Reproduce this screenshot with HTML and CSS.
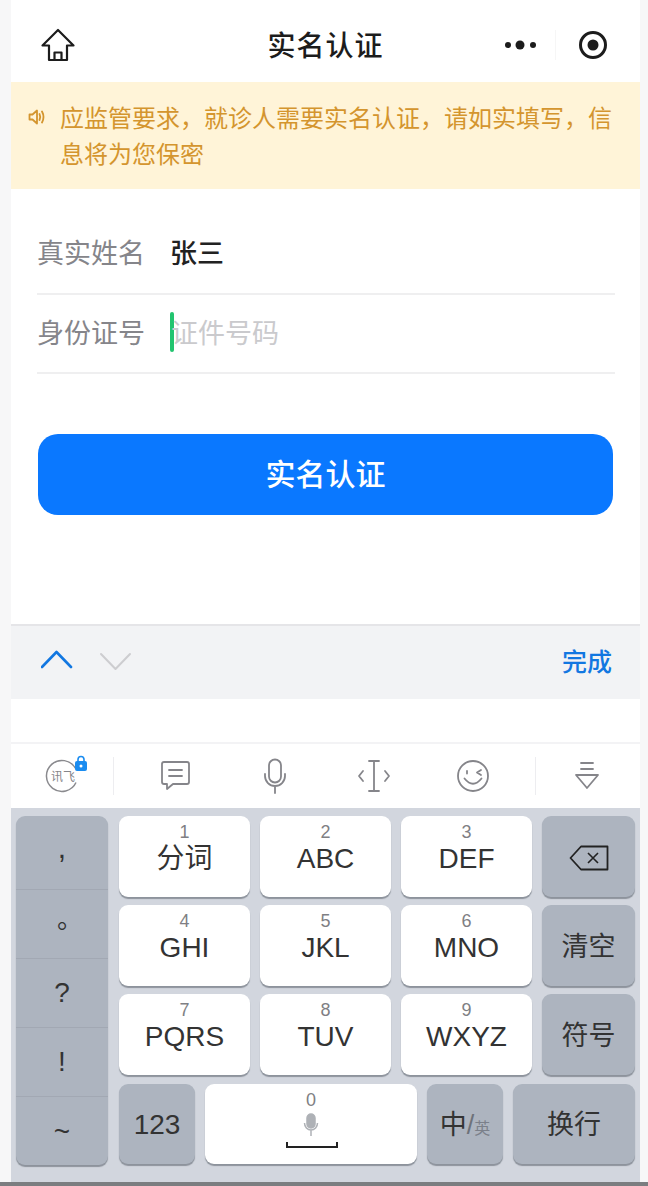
FILE: index.html
```html
<!DOCTYPE html>
<html lang="zh-CN">
<head>
    <meta charset="UTF-8">
    <meta name="viewport" content="width=device-width, initial-scale=1.0">
    <title>实名认证</title>
    <link rel="stylesheet" href="styles.css">
</head>
<body>
<div class="screen">
    <header class="nav">
        <svg class="nav-home" width="36" height="36" viewBox="0 0 36 36" fill="none" stroke="#1c1c1c" stroke-width="2.200" stroke-linejoin="round">
            <path d="M18 3 L2.500 18.500 H9 V33 H27 V18.500 H33.500 Z"/>
            <path d="M14.500 33 V25.500 H21.500 V33"/>
        </svg>
        <h1 class="nav-title">实名认证</h1>
        <div class="capsule">
            <svg class="capsule-more" width="34" height="12" viewBox="0 0 34 12" fill="#1c1c1c">
                <circle cx="4" cy="6" r="3"/><circle cx="16" cy="6" r="4.500"/><circle cx="29" cy="6" r="3"/>
            </svg>
            <span class="capsule-line"></span>
            <svg class="capsule-close" width="30" height="30" viewBox="0 0 30 30">
                <circle cx="15" cy="15" r="12.500" fill="none" stroke="#1c1c1c" stroke-width="3"/>
                <circle cx="15" cy="15" r="5.500" fill="#1c1c1c"/>
            </svg>
        </div>
    </header>

    <div class="notice">
        <svg class="notice-icon" width="18" height="18" viewBox="0 0 18 18" fill="none" stroke="#d4952e" stroke-width="1.800" stroke-linejoin="round" stroke-linecap="round">
            <path d="M1.500 6.500 H4.500 L9 2.500 V15.500 L4.500 11.500 H1.500 Z"/>
            <path d="M11.500 6 Q13 9 11.500 12"/>
            <path d="M14 3.500 Q17 9 14 14.500"/>
        </svg>
        <p class="notice-text">应监管要求，就诊人需要实名认证，请如实填写，信息将为您保密</p>
    </div>

    <form class="form">
        <div class="field">
            <span class="field-label">真实姓名</span>
            <span class="field-value">张三</span>
        </div>
        <div class="field field-id">
            <span class="field-label">身份证号</span>
            <span class="caret"></span>
            <span class="field-hint">证件号码</span>
        </div>
        <div class="submit">实名认证</div>
    </form>

    <div class="input-bar">
        <svg width="92" height="24" viewBox="0 0 92 24" fill="none" stroke-linecap="round" stroke-linejoin="round">
            <path d="M1 19 L15.500 4 L30 19" stroke="#1277e1" stroke-width="2.600"/>
            <path d="M60 6 L74.500 21 L89 6" stroke="#cdcdd0" stroke-width="2"/>
        </svg>
        <span class="input-done">完成</span>
    </div>
    <div class="blank"></div>

    <div class="ime-bar">
        <div class="ime-cell ime-cell-logo">
            <div class="ime-logo">
                <svg width="34" height="34" viewBox="0 0 34 34" fill="none" stroke="#8a8a8e" stroke-width="1.500">
                    <path d="M30.400 9.200 A15.500 15.500 0 1 0 31 23.500"/>
                </svg>
                <span class="ime-logo-text">讯飞</span>
                <svg class="ime-lock" width="14" height="16" viewBox="0 0 14 16">
                    <path d="M4 7 V4.500 a3 3 0 0 1 6 0 V7" fill="none" stroke="#1a8cf0" stroke-width="1.600"/>
                    <rect x="1" y="6" width="12" height="10" rx="2" fill="#1a8cf0"/>
                    <circle cx="7" cy="11" r="1.500" fill="#fff"/>
                </svg>
            </div>
        </div>
        <span class="ime-sep"></span>
        <div class="ime-tools">
            <div class="ime-cell">
                <svg width="32" height="34" viewBox="0 0 32 34" fill="none" stroke="#85858a" stroke-width="1.800" stroke-linejoin="round" stroke-linecap="round">
                    <path d="M4 3 H27 Q29 3 29 5 V23 Q29 25 27 25 H13 L7 30 V25 H4 Q2 25 2 23 V5 Q2 3 4 3 Z"/>
                    <path d="M9 11 H22 M9 17 H22"/>
                </svg>
            </div>
            <div class="ime-cell">
                <svg width="26" height="36" viewBox="0 0 26 36" fill="none" stroke="#85858a" stroke-width="1.800" stroke-linecap="round">
                    <rect x="7" y="1.500" width="12" height="23" rx="6"/>
                    <path d="M3 16 V18 a10 10 0 0 0 20 0 V16 M13 28 V35"/>
                </svg>
            </div>
            <div class="ime-cell">
                <svg width="34" height="34" viewBox="0 0 34 34" fill="none" stroke="#85858a" stroke-width="1.800" stroke-linecap="round" stroke-linejoin="round">
                    <path d="M12 2 H22 M12 32 H22 M17 2 V32"/>
                    <path d="M6 12 L2 17 L6 22 M28 12 L32 17 L28 22"/>
                </svg>
            </div>
            <div class="ime-cell">
                <svg width="34" height="34" viewBox="0 0 34 34" fill="none" stroke="#85858a" stroke-width="1.800" stroke-linecap="round" stroke-linejoin="round">
                    <circle cx="17" cy="17" r="15"/>
                    <path d="M11 12 V14.500 M25 11 L21 13.500 L25 16"/>
                    <path d="M8.500 19.500 Q17 30 25.500 19.500"/>
                </svg>
            </div>
        </div>
        <span class="ime-sep"></span>
        <div class="ime-cell ime-cell-last">
            <svg width="26" height="30" viewBox="0 0 26 30" fill="none" stroke="#85858a" stroke-width="1.800" stroke-linejoin="round" stroke-linecap="round">
                <path d="M7 2 H19 M7 8 H19 M2 14 H24 L13 27 Z"/>
            </svg>
        </div>
    </div>

    <div class="keyboard">
        <div class="key-col">
            <span class="key-punct key-punct-first">,</span>
            <span class="key-punct key-punct-dot">。</span>
            <span class="key-punct">?</span>
            <span class="key-punct">!</span>
            <span class="key-punct">~</span>
        </div>
        <div class="key-rows">
            <div class="key-row">
                <div class="key"><small>1</small>分词</div>
                <div class="key"><small>2</small>ABC</div>
                <div class="key"><small>3</small>DEF</div>
                <div class="key key-gray key-side">
                    <svg width="40" height="26" viewBox="0 0 40 26" fill="none" stroke="#222" stroke-width="1.800" stroke-linejoin="round">
                        <path d="M12 1.500 H38.500 V24.500 H12 L1.500 13 Z"/>
                        <path d="M19 8 L29 18 M29 8 L19 18" stroke-width="1.600"/>
                    </svg>
                </div>
            </div>
            <div class="key-row">
                <div class="key"><small>4</small>GHI</div>
                <div class="key"><small>5</small>JKL</div>
                <div class="key"><small>6</small>MNO</div>
                <div class="key key-gray key-side">清空</div>
            </div>
            <div class="key-row">
                <div class="key"><small>7</small>PQRS</div>
                <div class="key"><small>8</small>TUV</div>
                <div class="key"><small>9</small>WXYZ</div>
                <div class="key key-gray key-side">符号</div>
            </div>
            <div class="key-row key-row-last">
                <div class="key key-gray key-123">123</div>
                <div class="key key-space">
                    <small>0</small>
                    <svg class="space-mic" width="16" height="24" viewBox="0 0 16 24" fill="none" stroke="#aeb1b6" stroke-width="1.500">
                        <rect x="4" y="1" width="8" height="14" rx="4" fill="#aeb1b6"/>
                        <path d="M1.500 10 a6.500 7 0 0 0 13 0 M8 17 V23"/>
                    </svg>
                    <svg class="space-mark" width="52" height="6" viewBox="0 0 52 6" fill="none" stroke="#222" stroke-width="2">
                        <path d="M1 0 V5 H51 V0"/>
                    </svg>
                </div>
                <div class="key key-gray key-lang">中<span class="lang-sep">/</span><span class="lang-en">英</span></div>
                <div class="key key-gray key-return">换行</div>
            </div>
        </div>
    </div>
    <div class="bottom-line"></div>
</div>
</body>
</html>
```

FILE: styles.css
```css
* {
    box-sizing: border-box;
}

body {
    margin: 0;
    height: 1186px;
    overflow: hidden;
    background: #f7f7f8;
    font-family: "Noto Sans CJK SC", "Liberation Sans", sans-serif;
}

.screen {
    margin-left: 11px;
    width: 629px;
    height: 1186px;
    background: #fff;
    display: flex;
    flex-direction: column;
}

/* nav */
.nav {
    height: 82px;
    flex: none;
    display: flex;
    align-items: center;
    justify-content: center;
    position: relative;
}
.nav-home {
    position: absolute;
    left: 29px;
    top: 27px;
}
.nav-title {
    margin: 6px 0 0;
    font-size: 28px;
    line-height: 40px;
    font-weight: 500;
    color: #1c1c1c;
    letter-spacing: 1px;
}
.capsule {
    position: absolute;
    right: 32px;
    top: 28px;
    display: flex;
    align-items: center;
    height: 34px;
}
.capsule-more {
    margin-right: 17px;
}
.capsule-line {
    width: 1px;
    height: 30px;
    background: #f6f6f6;
    margin-right: 22px;
}

/* notice */
.notice {
    height: 107px;
    flex: none;
    background: #fff4d8;
    display: flex;
    align-items: flex-start;
    padding: 17px 16px 0 17px;
}
.notice-icon {
    flex: none;
    margin-top: 9px;
    margin-right: 14px;
}
.notice-text {
    margin: 0;
    font-size: 24px;
    line-height: 36px;
    color: #d4952e;
    width: 560px;
}

/* form */
.form {
    height: 435px;
    flex: none;
    padding: 27px 25px 0 26px;
}
.field {
    height: 78.500px;
    display: flex;
    align-items: center;
    border-bottom: 2px solid #efeff0;
    font-size: 27px;
    line-height: 36px;
    padding-bottom: 5px;
}
.field-id {
    height: 79px;
    padding-bottom: 2px;
}
.field-label {
    width: 133px;
    color: #85858a;
    flex: none;
}
.field-value {
    color: #222;
    font-weight: 500;
}
.caret {
    width: 4px;
    height: 40px;
    background: #22c46f;
    border-radius: 2px;
    flex: none;
}
.field-hint {
    color: #cacacd;
    margin-left: -3px;
}
.submit {
    margin: 60px 2px 0 1px;
    height: 81px;
    border-radius: 20px;
    background: #0a78ff;
    color: #fff;
    font-size: 30px;
    font-weight: 500;
    display: flex;
    align-items: center;
    justify-content: center;
    padding-bottom: 4px;
}

/* input accessory */
.input-bar {
    height: 75px;
    flex: none;
    background: #f2f3f5;
    border-top: 2px solid #e5e5e8;
    display: flex;
    align-items: center;
    justify-content: space-between;
    padding: 0 28px 5px 30px;
}
.input-done {
    font-size: 25px;
    font-weight: 500;
    color: #1277e1;
}
.blank {
    height: 43px;
    flex: none;
}

/* ime toolbar */
.ime-bar {
    height: 66px;
    flex: none;
    border-top: 2px solid #f3f3f5;
    display: flex;
    align-items: center;
}
.ime-cell {
    width: 99px;
    display: flex;
    align-items: center;
    justify-content: center;
    flex: none;
}
.ime-cell-logo {
    width: 102px;
}
.ime-cell-last {
    width: 101px;
}
.ime-tools {
    display: flex;
    padding: 0 13px 0 12px;
}
.ime-logo {
    width: 34px;
    height: 34px;
    position: relative;
    flex: none;
}
.ime-logo-text {
    position: absolute;
    left: 6px;
    top: 9px;
    font-size: 12px;
    line-height: 16px;
    color: #85858a;
    white-space: nowrap;
}
.ime-lock {
    position: absolute;
    right: -9px;
    top: -4px;
}
.ime-sep {
    width: 1px;
    height: 38px;
    background: #ededf0;
    flex: none;
}

/* keyboard */
.keyboard {
    height: 374px;
    flex: none;
    background: #d2d6de;
    padding: 8px 5px 0 5px;
    display: flex;
    gap: 11px;
    font-family: "Liberation Sans", "Noto Sans CJK SC", sans-serif;
}
.key-col {
    width: 92px;
    height: 349px;
    flex: none;
    border-radius: 9px;
    background: #adb4bf;
    box-shadow: 0 2px 1px #8d939c;
    display: flex;
    flex-direction: column;
}
.key-punct {
    flex: 0 0 69px;
    display: flex;
    align-items: center;
    justify-content: center;
    font-size: 28px;
    color: #333;
    border-bottom: 1px solid #a2a8b3;
}
.key-punct:last-child {
    border-bottom: 0;
}
.key-punct-first {
    flex-basis: 74px;
    font-size: 30px;
    padding-bottom: 9px;
}
.key-punct-dot {
    font-family: "Noto Sans CJK TC", sans-serif;
    font-size: 26px;
}
.key-rows {
    flex: 1;
    display: flex;
    flex-direction: column;
    gap: 8px;
}
.key-row {
    display: flex;
    gap: 10px;
    height: 81px;
}
.key-row-last {
    height: 80px;
    margin-top: 1px;
}
.key {
    width: 131px;
    background: #fff;
    border-radius: 9px;
    box-shadow: 0 2px 1px #8d939c;
    display: flex;
    flex-direction: column;
    align-items: center;
    font-size: 28px;
    line-height: 32px;
    color: #333;
    padding-top: 6px;
}
.key small {
    font-size: 18px;
    line-height: 18px;
    color: #7f7f84;
    margin-top: 1px;
    margin-bottom: 2px;
}
.key-gray {
    background: #adb4bf;
    justify-content: center;
    align-items: center;
    padding-top: 2px;
    padding-bottom: 0;
    flex-direction: row;
    font-size: 27px;
}
.key-side {
    width: 93px;
}
.key-123 {
    width: 76px;
    font-size: 28px;
}
.key-space {
    width: 212px;
    position: relative;
}
.space-mic {
    margin-top: 2px;
}
.space-mark {
    position: absolute;
    left: 81px;
    bottom: 16px;
}
.key-lang {
    width: 76px;
    white-space: nowrap;
}
.lang-sep {
    color: #6d727a;
}
.lang-en {
    font-size: 16px;
    color: #7b808a;
    margin-top: 8px;
}
.key-return {
    width: 122px;
}
.bottom-line {
    margin-left: -11px;
    width: 648px;
    height: 4px;
    flex: none;
    background: #7b7d80;
}
```
